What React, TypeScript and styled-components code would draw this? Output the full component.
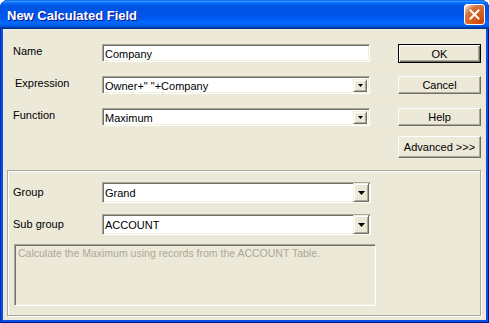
import React from "react";
import styled, { createGlobalStyle } from "styled-components";

const GlobalStyle = createGlobalStyle`
  html, body {
    margin: 0;
    padding: 0;
    background: #ffffff;
  }
  body {
    font-family: "Liberation Sans", Arial, sans-serif;
  }
`;

const Window = styled.div`
  width: 489px;
  height: 323px;
  box-sizing: border-box;
  display: flex;
  flex-direction: column;
  padding: 0 3px 3px 3px;
  background: #0a4fe0;
  border-radius: 8px 8px 0 0;
  overflow: hidden;
  box-shadow: inset 1px 0 0 #0030c0, inset -1px 0 0 #00138c,
    inset 0 -1px 0 #00138c;
`;

const TitleBar = styled.div`
  height: 29px;
  flex: none;
  margin: 0 -3px;
  padding: 0 4px 0 7px;
  display: flex;
  align-items: center;
  justify-content: space-between;
  border-radius: 7px 7px 0 0;
  background: linear-gradient(
    to bottom,
    #0058ee 0%,
    #3593ff 4%,
    #288eff 6%,
    #127dff 8%,
    #036ffc 10%,
    #0262ee 14%,
    #0057e5 20%,
    #0054e3 24%,
    #0055eb 56%,
    #005bf5 66%,
    #026afe 76%,
    #0062ef 86%,
    #0052d6 92%,
    #0040ab 94%,
    #003092 100%
  );
`;

const Title = styled.span`
  color: #ffffff;
  font-weight: bold;
  font-size: 13px;
  padding-top: 1px;
  text-shadow: 1px 1px 0 #0f1089;
`;

const CloseButton = styled.div`
  width: 21px;
  height: 21px;
  box-sizing: border-box;
  border: 1px solid #ffffff;
  border-radius: 3px;
  display: flex;
  align-items: center;
  justify-content: center;
  background: radial-gradient(
    circle at 90% 90%,
    #cc4600 0%,
    #dc6527 55%,
    #cd7546 70%,
    #ffccb2 90%,
    #ffffff 100%
  );
`;

const Body = styled.div`
  flex: 1;
  display: flex;
  flex-direction: column;
  background: #ece9d8;
  padding: 15px 0 4px 4px;
`;

const TopSection = styled.div`
  display: flex;
  padding-left: 6px;
`;

const FormGrid = styled.div<{ $col: number; $rowH: number; $gap: number }>`
  display: grid;
  grid-template-columns: 89px ${(p) => p.$col}px;
  grid-auto-rows: ${(p) => p.$rowH}px;
  row-gap: ${(p) => p.$gap}px;
  align-content: start;
`;

const Label = styled.div<{ $top: number; $indent?: number }>`
  font-size: 11px;
  line-height: 13px;
  color: #000000;
  padding-top: ${(p) => p.$top}px;
  padding-left: ${(p) => p.$indent ?? 0}px;
`;

const Sunken = styled.div`
  box-sizing: border-box;
  background: #ffffff;
  border-top: 1px solid #aca899;
  border-left: 1px solid #aca899;
  border-bottom: 1px solid #ffffff;
  border-right: 1px solid #ffffff;
  box-shadow: inset 1px 1px 0 #716f64, inset -1px -1px 0 #f1efe2;
`;

const Field = styled(Sunken)<{ $padRight?: number }>`
  display: flex;
  align-items: center;
  padding: 0 ${(p) => p.$padRight ?? 2}px 0 2px;
  font-size: 11px;
  color: #000000;
  white-space: nowrap;
`;

const FieldText = styled.span`
  flex: 1;
  padding-top: 1px;
`;

const DropButton = styled.div<{ $w: number; $h: number }>`
  width: ${(p) => p.$w}px;
  height: ${(p) => p.$h}px;
  box-sizing: border-box;
  background: #ece9d8;
  border: 1px solid;
  border-color: #f1efe2 #716f64 #716f64 #f1efe2;
  box-shadow: inset 1px 1px 0 #ffffff, inset -1px -1px 0 #aca899;
  display: flex;
  align-items: center;
  justify-content: center;
`;

const ButtonColumn = styled.div`
  display: flex;
  flex-direction: column;
  width: 83px;
  margin-left: 28px;
`;

const Button = styled.div<{ $h: number; $mt: number; $default?: boolean }>`
  height: ${(p) => p.$h}px;
  margin-top: ${(p) => p.$mt}px;
  box-sizing: border-box;
  display: flex;
  align-items: center;
  justify-content: center;
  font-size: 11px;
  color: #000000;
  background: #ece9d8;
  border: 1px solid;
  border-color: ${(p) =>
    p.$default ? "#000000" : "#ffffff #716f64 #716f64 #ffffff"};
  box-shadow: ${(p) =>
    p.$default
      ? "inset 1px 1px 0 #ffffff, inset -1px -1px 0 #716f64, inset -2px -2px 0 #aca899"
      : "inset -1px -1px 0 #aca899"};
`;

const GroupBox = styled.div`
  flex: 1;
  width: 474px;
  box-sizing: border-box;
  margin-top: 12px;
  padding: 11px 0 0 5px;
  border: 1px solid #aca899;
  box-shadow: inset 1px 1px 0 #ffffff, 1px 1px 0 #ffffff;
`;

const Description = styled(Sunken)`
  width: 362px;
  height: 62px;
  margin: 9px 0 0 1px;
  padding: 2px 3px;
  background: #ece9d8;
  font-size: 10.5px;
  line-height: 13px;
  color: #aca899;
`;

const Arrow = ({ w, h }: { w: number; h: number }) => (
  <svg width={w} height={h} viewBox={`0 0 ${w} ${h}`}>
    <polygon points={`0,0 ${w},0 ${w / 2},${h}`} fill="#000000" />
  </svg>
);

const Combo = ({ text, big }: { text: string; big?: boolean }) => (
  <Field $padRight={big ? 1 : 2}>
    <FieldText>{text}</FieldText>
    {big ? (
      <DropButton $w={16} $h={19}>
        <Arrow w={7} h={4} />
      </DropButton>
    ) : (
      <DropButton $w={14} $h={13}>
        <Arrow w={5} h={3} />
      </DropButton>
    )}
  </Field>
);

export default function App() {
  return (
    <>
      <GlobalStyle />
      <Window>
        <TitleBar>
          <Title>New Calculated Field</Title>
          <CloseButton>
            <svg width="11" height="11" viewBox="0 0 11 11">
              <path
                d="M1.5 1.5 L9.5 9.5 M9.5 1.5 L1.5 9.5"
                stroke="#ffffff"
                strokeWidth="2"
                strokeLinecap="square"
              />
            </svg>
          </CloseButton>
        </TitleBar>
        <Body>
          <TopSection>
            <FormGrid $col={268} $rowH={18} $gap={14}>
              <Label $top={1}>Name</Label>
              <Field>
                <FieldText>Company</FieldText>
              </Field>
              <Label $top={1} $indent={2}>
                Expression
              </Label>
              <Combo text={`Owner+" "+Company`} />
              <Label $top={1}>Function</Label>
              <Combo text="Maximum" />
            </FormGrid>
            <ButtonColumn>
              <Button $h={19} $mt={0} $default>
                OK
              </Button>
              <Button $h={18} $mt={13}>
                Cancel
              </Button>
              <Button $h={18} $mt={14}>
                Help
              </Button>
              <Button $h={22} $mt={10}>
                Advanced &gt;&gt;&gt;
              </Button>
            </ButtonColumn>
          </TopSection>
          <GroupBox>
            <FormGrid $col={269} $rowH={21} $gap={11}>
              <Label $top={4}>Group</Label>
              <Combo text="Grand" big />
              <Label $top={4}>Sub group</Label>
              <Combo text="ACCOUNT" big />
            </FormGrid>
            <Description>
              Calculate the Maximum using records from the ACCOUNT Table.
            </Description>
          </GroupBox>
        </Body>
      </Window>
    </>
  );
}
